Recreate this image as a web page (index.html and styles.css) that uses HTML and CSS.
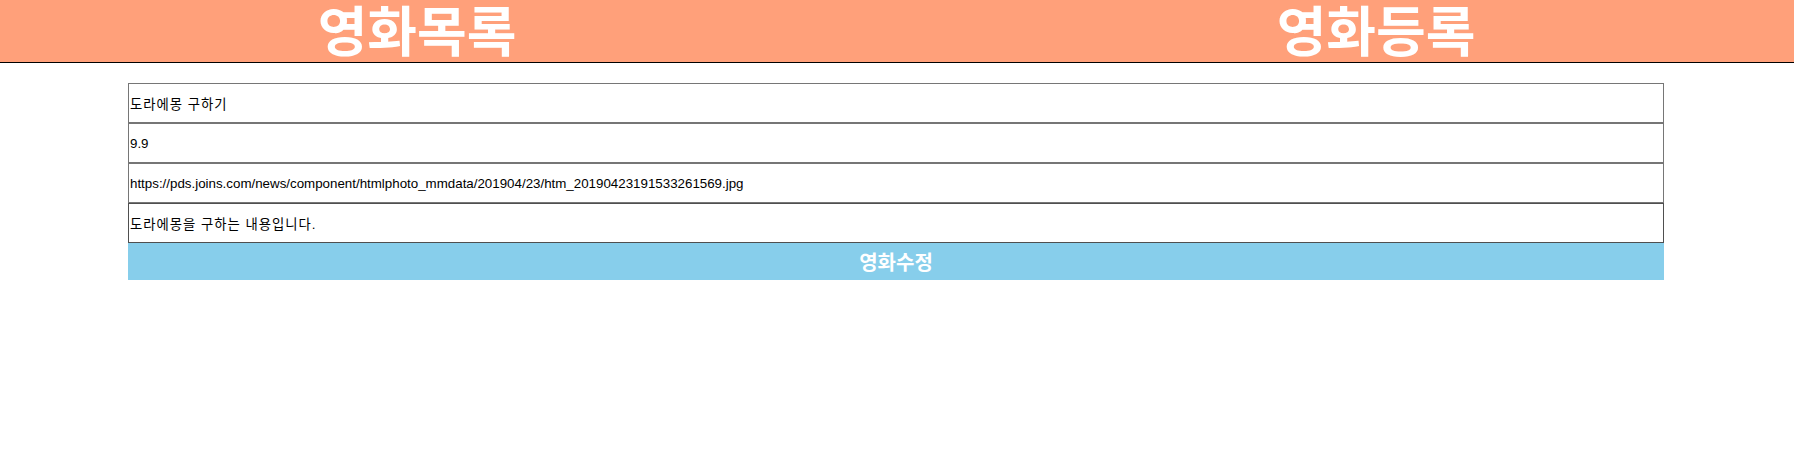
FILE: index.html
```html
<!DOCTYPE html>
<html lang="ko">
<head>
<meta charset="utf-8">
<title>영화수정</title>
<link rel="stylesheet" href="styles.css">
</head>
<body>
<header class="nav">
  <a class="nav-link" href="#">영화목록</a>
  <a class="nav-link" href="#">영화등록</a>
</header>
<form class="movie-form">
  <input class="field field-ko" type="text" value="도라에몽 구하기">
  <input class="field" type="text" value="9.9">
  <input class="field" type="text" value="https://pds.joins.com/news/component/htmlphoto_mmdata/201904/23/htm_20190423191533261569.jpg">
  <input class="field field-ko field-last" type="text" value="도라에몽을 구하는 내용입니다.">
  <button class="submit" type="button">영화수정</button>
</form>
</body>
</html>
```
FILE: styles.css
```css
html, body {
  margin: 0;
  padding: 0;
  background: #fff;
  font-family: "Liberation Sans", "Noto Sans CJK KR", sans-serif;
}
.nav {
  display: flex;
  gap: 125px;
  height: 62px;
  background: #ffa07a;
  border-bottom: 1px solid #000;
}
.nav-link {
  width: 834px;
  text-align: center;
  color: #fff;
  text-decoration: none;
  font-family: "Noto Sans CJK KR", sans-serif;
  font-weight: 700;
  font-size: 54px;
  line-height: 58px;
  white-space: nowrap;
}
.movie-form {
  display: flex;
  flex-direction: column;
  width: 1536px;
  margin: 20px 0 0 128px;
}
.field {
  box-sizing: border-box;
  height: 40px;
  margin: 0;
  padding: 0 1px;
  border: 1px solid #767676;
  font-family: "Liberation Sans", "Noto Sans CJK KR", sans-serif;
  font-size: 13.33px;
  color: #000;
  background: #fff;
  outline: none;
}
.field-ko {
  letter-spacing: 1px;
}
.field-last {
  border-color: #4f4f4f;
}
.submit {
  height: 37px;
  margin: 0;
  border: 0;
  background: #87ceeb;
  color: #fff;
  font-family: "Noto Sans CJK KR", sans-serif;
  font-weight: 700;
  font-size: 20px;
  line-height: 37px;
  padding: 0;
}
```
